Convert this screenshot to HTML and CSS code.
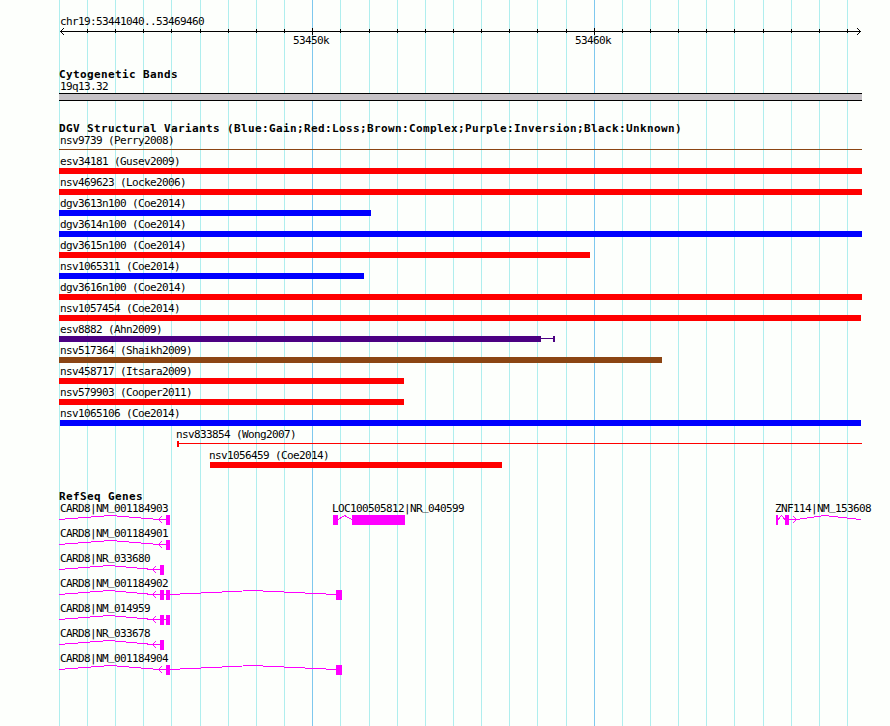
FILE: index.html
```html
<!DOCTYPE html>
<html lang="en">
<head>
<meta charset="utf-8">
<title>chr19:53441040..53469460</title>
<link rel="stylesheet" href="styles.css">
</head>
<body>
<main class="browser">
  <svg class="gridlines" width="890" height="726" aria-hidden="true">
    <path class="minor" d="M59.5 0V726M87.5 0V726M115.5 0V726M143.5 0V726M171.5 0V726M200.5 0V726M228.5 0V726M256.5 0V726M284.5 0V726M340.5 0V726M369.5 0V726M397.5 0V726M425.5 0V726M453.5 0V726M481.5 0V726M509.5 0V726M537.5 0V726M566.5 0V726M622.5 0V726M650.5 0V726M678.5 0V726M706.5 0V726M734.5 0V726M763.5 0V726M791.5 0V726M819.5 0V726M847.5 0V726"/>
    <path class="major" d="M312.5 0V726M594.5 0V726"/>
  </svg>

  <header class="ruler">
    <div class="label">chr19:53441040..53469460</div>
    <svg class="axis" width="803" height="7">
      <path d="M1 3.5H802M28.5 1V5M56.5 1V5M84.5 1V5M112.5 1V5M141.5 1V5M169.5 1V5M197.5 1V5M225.5 1V5M253.5 0V7M281.5 1V5M310.5 1V5M338.5 1V5M366.5 1V5M394.5 1V5M422.5 1V5M450.5 1V5M478.5 1V5M507.5 1V5M535.5 0V7M563.5 1V5M591.5 1V5M619.5 1V5M647.5 1V5M675.5 1V5M704.5 1V5M732.5 1V5M760.5 1V5M788.5 1V5"/>
      <path d="M4.8 0.2L1.5 3.5L4.8 6.8M798.2 0.2L801.5 3.5L798.2 6.8"/>
    </svg>
    <div class="ticks"><span>53450k</span><span>53460k</span></div>
  </header>

  <section class="track cyto">
    <h2>Cytogenetic Bands</h2>
    <div class="label">19q13.32</div>
    <div class="band"></div>
  </section>

  <section class="track variants">
    <h2>DGV Structural Variants (Blue:Gain;Red:Loss;Brown:Complex;Purple:Inversion;Black:Unknown)</h2>
    <div class="variant complex"><div class="label">nsv9739 (Perry2008)</div><div class="glyph"><i class="line" style="width:803px"></i></div></div>
    <div class="variant loss"><div class="label">esv34181 (Gusev2009)</div><div class="glyph"><i class="bar" style="width:803px"></i></div></div>
    <div class="variant loss"><div class="label">nsv469623 (Locke2006)</div><div class="glyph"><i class="bar" style="width:803px"></i></div></div>
    <div class="variant gain"><div class="label">dgv3613n100 (Coe2014)</div><div class="glyph"><i class="bar" style="width:312px"></i></div></div>
    <div class="variant gain"><div class="label">dgv3614n100 (Coe2014)</div><div class="glyph"><i class="bar" style="width:803px"></i></div></div>
    <div class="variant loss"><div class="label">dgv3615n100 (Coe2014)</div><div class="glyph"><i class="bar" style="width:531px"></i></div></div>
    <div class="variant gain"><div class="label">nsv1065311 (Coe2014)</div><div class="glyph"><i class="bar" style="width:305px"></i></div></div>
    <div class="variant loss"><div class="label">dgv3616n100 (Coe2014)</div><div class="glyph"><i class="bar" style="width:803px"></i></div></div>
    <div class="variant loss"><div class="label">nsv1057454 (Coe2014)</div><div class="glyph"><i class="bar" style="width:802px"></i></div></div>
    <div class="variant inversion"><div class="label">esv8882 (Ahn2009)</div><div class="glyph"><i class="bar" style="width:482px"></i><i class="line" style="width:12px"></i><i class="bar" style="width:2px"></i></div></div>
    <div class="variant complex"><div class="label">nsv517364 (Shaikh2009)</div><div class="glyph"><i class="bar" style="width:603px"></i></div></div>
    <div class="variant loss"><div class="label">nsv458717 (Itsara2009)</div><div class="glyph"><i class="bar" style="width:345px"></i></div></div>
    <div class="variant loss"><div class="label">nsv579903 (Cooper2011)</div><div class="glyph"><i class="bar" style="width:345px"></i></div></div>
    <div class="variant gain"><div class="label">nsv1065106 (Coe2014)</div><div class="glyph"><i class="bar" style="width:801px;margin-left:1px"></i></div></div>
    <div class="variant loss" style="margin-left:118px"><div class="label tight">nsv833854 (Wong2007)</div><div class="glyph"><i class="bar" style="width:2px"></i><i class="line" style="width:683px"></i></div></div>
    <div class="variant loss" style="margin-left:151px"><div class="label tight">nsv1056459 (Coe2014)</div><div class="glyph"><i class="bar" style="width:292px"></i></div></div>
  </section>

  <section class="track genes">
    <h2>RefSeq Genes</h2>
    <div class="gene-row">
      <div class="gene first"><div class="label">CARD8|NM<span class="low">_</span>001184903</div>
        <svg width="273" height="10"><path d="M0 4.5L52 .5L100 4.5H107M102.8 1.2L99.5 4.5L102.8 7.8"/><rect x="107" width="4" height="10"/></svg></div>
      <div class="gene second"><div class="label flush">LOC100505812|NR<span class="low">_</span>040599</div>
        <svg width="443" height="10"><path d="M6 4.5L12.5 .5L20 4.5"/><rect x="1" width="5" height="10"/><rect x="20" width="53" height="10"/></svg></div>
      <div class="gene"><div class="label flush">ZNF114|NM<span class="low">_</span>153608</div>
        <svg width="115" height="10"><path d="M3 4.5L6.5 .5L10 4.5M14 4.5H22L49 .5L86 4.5M18.2 1.2L21.5 4.5L18.2 7.8"/><rect x="1" width="2" height="10"/><rect x="10" width="4" height="10"/></svg></div>
    </div>
    <div class="gene-row"><div class="gene"><div class="label">CARD8|NM<span class="low">_</span>001184901</div>
      <svg width="803" height="10"><path d="M0 4.5L52 .5L100 4.5H107M102.8 1.2L99.5 4.5L102.8 7.8"/><rect x="107" width="4" height="10"/></svg></div></div>
    <div class="gene-row"><div class="gene"><div class="label">CARD8|NR<span class="low">_</span>033680</div>
      <svg width="803" height="10"><path d="M0 4.5L50 .5L94 4.5H101M96.8 1.2L93.5 4.5L96.8 7.8"/><rect x="101" width="4" height="10"/></svg></div></div>
    <div class="gene-row"><div class="gene"><div class="label">CARD8|NM<span class="low">_</span>001184902</div>
      <svg width="803" height="10"><path d="M0 4.5L50 .5L94 4.5H111L194 .5L277 4.5M96.8 1.2L93.5 4.5L96.8 7.8"/><rect x="101" width="4" height="10"/><rect x="107" width="4" height="10"/><rect x="277" width="6" height="10"/></svg></div></div>
    <div class="gene-row"><div class="gene"><div class="label">CARD8|NM<span class="low">_</span>014959</div>
      <svg width="803" height="10"><path d="M0 4.5L50 .5L94 4.5H111M96.8 1.2L93.5 4.5L96.8 7.8"/><rect x="101" width="4" height="10"/><rect x="107" width="4" height="10"/></svg></div></div>
    <div class="gene-row"><div class="gene"><div class="label">CARD8|NR<span class="low">_</span>033678</div>
      <svg width="803" height="10"><path d="M0 4.5L50 .5L94 4.5H101M96.8 1.2L93.5 4.5L96.8 7.8"/><rect x="101" width="4" height="10"/></svg></div></div>
    <div class="gene-row"><div class="gene"><div class="label">CARD8|NM<span class="low">_</span>001184904</div>
      <svg width="803" height="10"><path d="M0 4.5L52 .5L100 4.5H111L194 .5L277 4.5M102.8 1.2L99.5 4.5L102.8 7.8"/><rect x="107" width="4" height="10"/><rect x="277" width="6" height="10"/></svg></div></div>
  </section>
</main>
</body>
</html>
```
FILE: styles.css
```css
body {
  margin: 0;
  background: #fdfffc;
  color: #000;
}

.browser {
  position: relative;
  box-sizing: border-box;
  width: 890px;
  height: 726px;
  padding: 15px 0 0 59px;
  overflow: hidden;
  font: 11px/13px "DejaVu Sans Mono", monospace;
  letter-spacing: -0.622px;
  white-space: nowrap;
}

svg {
  display: block;
  fill: none;
  shape-rendering: crispEdges;
}

.gridlines {
  position: absolute;
  top: 0;
  left: 0;
  z-index: -1;
}

.minor { stroke: #afeeee; }
.major { stroke: #7ec8ee; }

.label {
  height: 13px;
  padding-left: 1px;
}

.label.flush { padding-left: 0; }

.label.tight {
  padding-left: 0;
  margin-left: -1px;
}

.low {
  line-height: 0;
  vertical-align: 2px;
}

.axis { stroke: #000; }

.ticks {
  display: flex;
  gap: 246px;
  height: 13px;
  margin-top: -1px;
  padding-left: 234px;
}

.ticks span { width: 36px; }

.track { margin-top: 21px; }

h2 {
  height: 12px;
  margin: 0;
  font-size: 11px;
  font-weight: bold;
  line-height: 13px;
  letter-spacing: 0.378px;
}

.band {
  box-sizing: border-box;
  width: 803px;
  height: 8px;
  border: solid #000;
  border-width: 1px 0;
  background: #c6c2c6;
}

.variant { height: 21px; }

.glyph {
  display: flex;
  height: 6px;
}

.bar {
  height: 6px;
  background: currentColor;
}

.line {
  height: 1px;
  margin-top: 2px;
  background: currentColor;
}

.loss .glyph { color: #f00; }
.gain .glyph { color: #00f; }
.complex .glyph { color: #8b4513; }
.inversion .glyph { color: #4b0082; }

.genes { margin-top: 20px; }

.gene-row {
  display: flex;
  height: 25px;
}

.gene svg {
  stroke: #f0f;
}

.gene rect {
  fill: #f0f;
  stroke: none;
}
```
